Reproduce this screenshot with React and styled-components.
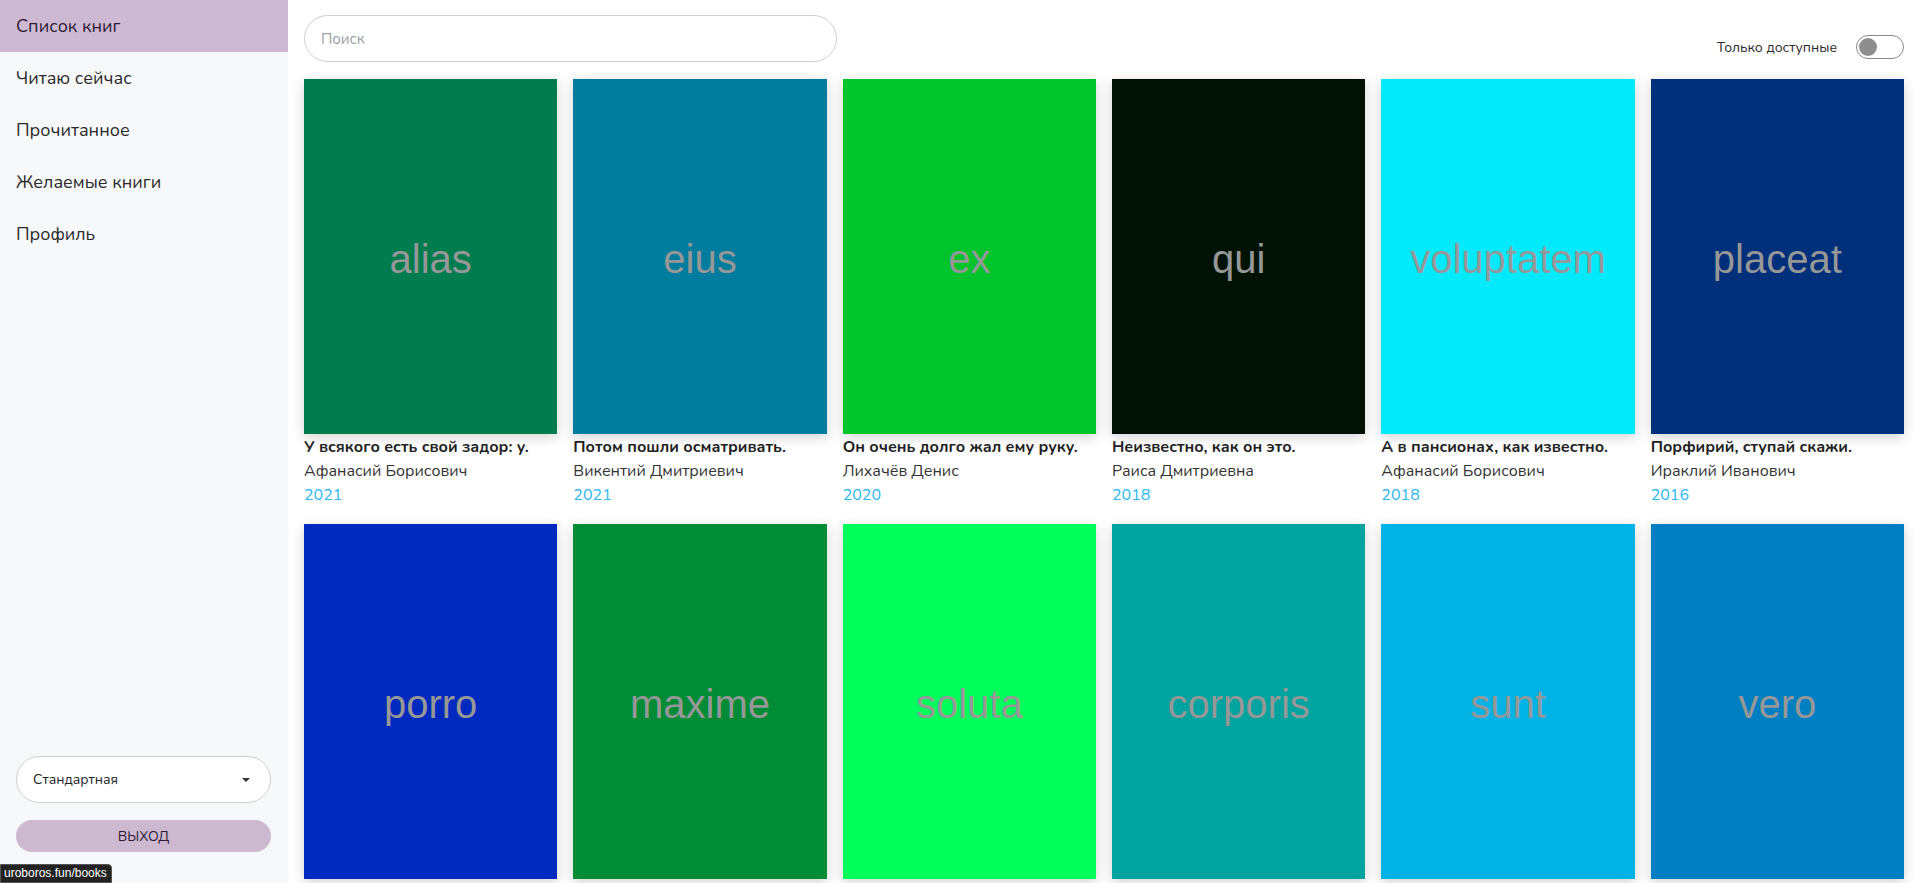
import React, { useState } from "react";
import styled, { createGlobalStyle } from "styled-components";

const books = [
    { cover: "alias", color: "#007c4f", title: "У всякого есть свой задор: у.", author: "Афанасий Борисович", year: 2021 },
    { cover: "eius", color: "#007c9e", title: "Потом пошли осматривать.", author: "Викентий Дмитриевич", year: 2021 },
    { cover: "ex", color: "#00c42b", title: "Он очень долго жал ему руку.", author: "Лихачёв Денис", year: 2020 },
    { cover: "qui", color: "#001204", title: "Неизвестно, как он это.", author: "Раиса Дмитриевна", year: 2018 },
    { cover: "voluptatem", color: "#00eafc", title: "А в пансионах, как известно.", author: "Афанасий Борисович", year: 2018 },
    { cover: "placeat", color: "#002f7b", title: "Порфирий, ступай скажи.", author: "Ираклий Иванович", year: 2016 },
    { cover: "porro", color: "#0029c0", title: "Вот уже пошли", author: "Раиса Дмитриевна", year: 2015 },
    { cover: "maxime", color: "#008c36", title: "Ровно в восемь", author: "Лихачёв Денис", year: 2015 },
    { cover: "soluta", color: "#00ff5b", title: "Не было видно", author: "Ираклий Иванович", year: 2014 },
    { cover: "corporis", color: "#00a3a0", title: "Так вот как", author: "Викентий Дмитриевич", year: 2014 },
    { cover: "sunt", color: "#00b3e6", title: "Тем более что", author: "Афанасий Борисович", year: 2013 },
    { cover: "vero", color: "#0080c2", title: "Сказавши это, он", author: "Раиса Дмитриевна", year: 2012 },
];

const menu = ["Список книг", "Читаю сейчас", "Прочитанное", "Желаемые книги", "Профиль"];

function App() {
    const [onlyAvailable, setOnlyAvailable] = useState(false);

    return (
        <Layout>
            <GlobalStyle />
            <Sidebar>
                <Nav>
                    {menu.map((item, idx) => (
                        <NavItem key={`nav-${idx}`} active={idx === 0}>
                            {item}
                        </NavItem>
                    ))}
                </Nav>
                <SidebarBottom>
                    <ThemeSelect>
                        <span>Стандартная</span>
                        <Caret />
                    </ThemeSelect>
                    <LogoutButton>выход</LogoutButton>
                </SidebarBottom>
            </Sidebar>
            <Main>
                <TopBar>
                    <Search placeholder="Поиск" />
                    <Filter>
                        <FilterLabel>Только доступные</FilterLabel>
                        <Switch on={onlyAvailable} onClick={() => setOnlyAvailable(!onlyAvailable)}>
                            <Knob on={onlyAvailable} />
                        </Switch>
                    </Filter>
                </TopBar>
                <Grid>
                    {books.map((book, idx) => (
                        <Card key={`book-${idx}`}>
                            <Cover color={book.color}>{book.cover}</Cover>
                            <Title>{book.title}</Title>
                            <Author>{book.author}</Author>
                            <Year>{book.year}</Year>
                        </Card>
                    ))}
                </Grid>
            </Main>
            <StatusBar>uroboros.fun/books</StatusBar>
        </Layout>
    );
}

const GlobalStyle = createGlobalStyle`
    body {
        margin: 0;
        overflow: hidden;
        font-family: "Nunito", "Lato", "Open Sans", sans-serif;
        background: #ffffff;
    }
    * {
        box-sizing: border-box;
    }
`;

const Layout = styled.div`
    display: flex;
    height: 100vh;
`;

const Sidebar = styled.div`
    width: 288px;
    flex-shrink: 0;
    background: #f7f8fa;
    display: flex;
    flex-direction: column;
`;

const Nav = styled.div`
    display: flex;
    flex-direction: column;
`;

const NavItem = styled.div`
    height: 52px;
    line-height: 52px;
    padding-left: 16px;
    font-size: 18px;
    color: ${(p) => (p.active ? "#2e1b34" : "#2a2a2a")};
    background: ${(p) => (p.active ? "#cdb9d1" : "transparent")};
    cursor: pointer;
`;

const SidebarBottom = styled.div`
    margin-top: auto;
    padding: 0 17px 31px 16px;
    display: flex;
    flex-direction: column;
    gap: 17px;
`;

const ThemeSelect = styled.div`
    height: 47px;
    border: 1px solid #cfcfcf;
    border-radius: 24px;
    background: #ffffff;
    display: flex;
    align-items: center;
    justify-content: space-between;
    padding: 0 20px 0 16px;
    font-size: 14px;
    color: #222;
`;

const Caret = styled.span`
    width: 0;
    height: 0;
    border-left: 4px solid transparent;
    border-right: 4px solid transparent;
    border-top: 4px solid #333;
`;

const LogoutButton = styled.button`
    height: 32px;
    border: none;
    border-radius: 16px;
    background: #ccb8cf;
    color: #2e1b34;
    font-family: inherit;
    font-size: 14px;
    text-transform: uppercase;
    cursor: pointer;
`;

const Main = styled.div`
    flex: 1;
    padding: 15px 11px 0 16px;
    overflow: hidden;
`;

const TopBar = styled.div`
    display: flex;
    justify-content: space-between;
    margin-bottom: 17px;
`;

const Search = styled.input`
    width: 533px;
    height: 47px;
    border: 1px solid #cfcfcf;
    border-radius: 24px;
    padding: 0 16px;
    font-family: inherit;
    font-size: 15px;
    outline: none;
    &::placeholder {
        color: #9a9ea6;
    }
`;

const Filter = styled.div`
    align-self: flex-end;
    display: flex;
    align-items: center;
    gap: 19px;
    margin-bottom: 3px;
`;

const FilterLabel = styled.span`
    font-size: 14px;
    color: #2a2a2a;
`;

const Switch = styled.div`
    width: 48px;
    height: 24px;
    border: 1px solid #8a8a8a;
    border-radius: 12px;
    padding: 2px;
    display: flex;
    justify-content: ${(p) => (p.on ? "flex-end" : "flex-start")};
    cursor: pointer;
`;

const Knob = styled.div`
    width: 18px;
    height: 18px;
    border-radius: 50%;
    background: ${(p) => (p.on ? "#29b6f6" : "#8e8e8e")};
`;

const Grid = styled.div`
    display: grid;
    grid-template-columns: repeat(6, 1fr);
    column-gap: 16px;
    row-gap: 17px;
`;

const Card = styled.div`
    display: flex;
    flex-direction: column;
`;

const Cover = styled.div`
    height: 355px;
    padding-top: 6px;
    background: ${(p) => p.color};
    box-shadow: 0 3px 12px rgba(0, 0, 0, 0.18);
    display: flex;
    align-items: center;
    justify-content: center;
    font-family: "Liberation Sans", Arial, sans-serif;
    font-size: 40px;
    color: #979797;
`;

const Title = styled.div`
    margin-top: 1px;
    font-size: 16px;
    font-weight: 700;
    line-height: 24px;
    color: #222;
    white-space: nowrap;
    overflow: hidden;
`;

const Author = styled.div`
    font-size: 16px;
    line-height: 24px;
    color: #333;
`;

const Year = styled.div`
    font-size: 16px;
    line-height: 24px;
    color: #2bb7f2;
`;

const StatusBar = styled.div`
    position: fixed;
    left: 0;
    bottom: 0;
    padding: 1px 4px 2px 3px;
    background: #222;
    color: #ffffff;
    font-family: "Liberation Sans", Arial, sans-serif;
    font-size: 12px;
    border-top-right-radius: 4px;
    border: 1px solid #555;
`;

export default App;
